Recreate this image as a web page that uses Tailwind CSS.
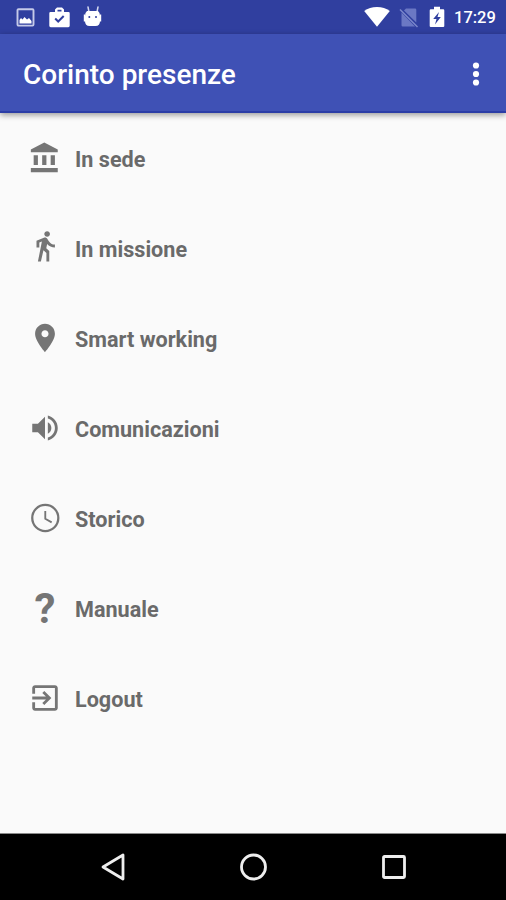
<!DOCTYPE html>
<html lang="it">

<head>
    <meta charset="UTF-8">
    <meta name="viewport" content="width=device-width, initial-scale=1.0">
    <title>Corinto presenze</title>
    <script src="https://cdn.jsdelivr.net/npm/@tailwindcss/browser@4"></script>
</head>

<body class="bg-[#fafafa] font-['Roboto',sans-serif]">
<div class="flex flex-col h-[900px] w-[506px] overflow-hidden">
    <!-- Status bar -->
    <div class="flex items-center h-[34px] shrink-0 bg-[#303f9f] pl-4 pr-[10px] text-white">
        <svg class="w-[19px] h-[19px] mt-px" viewBox="0 0 19 19">
            <rect x="1.500" y="1.200" width="16" height="16.400" rx="1" fill="none" stroke="#c5cae9" stroke-width="1.900"/>
            <path d="M3.500 15.500V12l1.500-2 1.500 1.500 2-2.500 2.500 2.500 2-1.500 2.500 3v2.500z" fill="#fff"/>
        </svg>
        <svg class="w-[21px] h-[21px] ml-[14px]" viewBox="0 0 21 21">
            <path d="M6 5V2.500L8 .5h5l2 2V5h4.500q1.200 0 1.200 1.200v12.600q0 1.400-1.400 1.400H1.700Q.3 20.200.3 18.800V6.200Q.3 5 1.500 5zM8.500 4.500h4V2.800h-4z" fill="#fff" fill-rule="evenodd"/>
            <path d="M6.200 11.500l3 3 5.500-5.500" fill="none" stroke="#303f9f" stroke-width="2"/>
        </svg>
        <svg class="w-[19px] h-[21px] ml-[13px] -mt-px" viewBox="0 0 19 21">
            <path d="M5 1l.8 4M15 1l-.8 4" stroke="#d5d9f0" stroke-width="1.500" stroke-linecap="round"/>
            <path d="M4 5h11q2 1.500 2 5v5q0 5-4.500 5h-6q-4.500 0-4.500-5v-5Q2 6.500 4 5z" fill="#fff"/>
            <path d="M1.500 8.500v7M17.500 8.500v7" stroke="#fff" stroke-width="1.400"/>
            <circle cx="6.300" cy="11" r="1" fill="#303f9f"/>
            <circle cx="13" cy="11" r="1" fill="#303f9f"/>
        </svg>
        <svg class="w-[26px] h-[20px] ml-auto" viewBox="0 0 26 20">
            <path d="M13 19.800L.2 4Q5.500 0 13 0t12.800 4z" fill="#fff"/>
        </svg>
        <svg class="w-[20px] h-[20px] ml-[9px] mt-px" viewBox="0 0 20 20">
            <path d="M7 .5h9q1.300 0 1.300 1.300V14.500L5 2.500zM2.500 4.500L16 18.500H3.800q-1.300 0-1.300-1.300z" fill="#6b78c4"/>
            <path d="M1 1.500l17.500 17.500" stroke="#7c88cc" stroke-width="1.500"/>
        </svg>
        <svg class="w-[16px] h-[22px] ml-[10px]" viewBox="0 0 16 22">
            <path d="M5 .8h6v2.500h3.200q1.100 0 1.100 1.100v15.500q0 1.100-1.100 1.100H1.800q-1.100 0-1.100-1.100V4.400q0-1.100 1.100-1.100H5z" fill="#fff"/>
            <path d="M10 6L4.200 13h3.300L6 18.500l5.800-7.500H8.500z" fill="#303f9f"/>
        </svg>
        <span class="ml-[9px] mt-[3px] w-[42px] text-[16.5px] leading-none font-medium whitespace-nowrap">17:29</span>
    </div>

    <!-- Toolbar -->
    <div class="relative flex items-center justify-between h-[79px] shrink-0 bg-[#3f51b5] border-b-2 border-[#2b3da6] pl-[23px] pr-[26px] shadow-[0_2px_6px_rgba(0,0,0,0.4)]">
        <h1 class="mt-[5px] text-[28px] leading-none font-medium text-white">Corinto presenze</h1>
        <svg class="w-[8px] h-[26px] mt-[2px]" viewBox="0 0 8 26" fill="#fff">
            <circle cx="4" cy="4.500" r="3.100"/>
            <circle cx="4" cy="13" r="3.100"/>
            <circle cx="4" cy="21.500" r="3.100"/>
        </svg>
    </div>

    <!-- Menu -->
    <ul class="flex-1 text-[21.6px] font-bold text-[#6a6a6a]">
        <li class="flex items-center h-[90px] pl-7">
            <svg class="w-[34px] h-[34px]" viewBox="0 0 24 24" fill="#757575">
                <path d="M4 10v7h3v-7H4zm6 0v7h3v-7h-3zM2 22h19v-3H2v3zm14-12v7h3v-7h-3zm-4.500-9L2 6v2h19V6l-9.500-5z"/>
            </svg>
            <span class="ml-[13px] mt-[4px]">In sede</span>
        </li>
        <li class="flex items-center h-[90px] pl-7">
            <svg class="w-[34px] h-[34px] -mt-[4px]" viewBox="0 0 24 24" fill="#757575">
                <path d="M13.500 5.500c1.100 0 2-.9 2-2s-.9-2-2-2-2 .9-2 2 .9 2 2 2zM9.800 8.900L7 23h2.100l1.800-8 2.100 2v6h2v-7.500l-2.100-2 .6-3C14.800 12 16.800 13 19 13v-2c-1.900 0-3.500-1-4.300-2.400l-1-1.600c-.4-.6-1-1-1.700-1-.3 0-.5.1-.8.1L6 8.300V13h2V9.600l1.800-.7"/>
            </svg>
            <span class="ml-[13px] mt-[4px]">In missione</span>
        </li>
        <li class="flex items-center h-[90px] pl-7">
            <svg class="w-[34px] h-[34px]" viewBox="0 0 24 24" fill="#757575">
                <path d="M12 2C8.130 2 5 5.130 5 9c0 5.250 7 13 7 13s7-7.750 7-13c0-3.870-3.130-7-7-7zm0 9.500c-1.380 0-2.500-1.120-2.500-2.500s1.120-2.500 2.500-2.500 2.500 1.120 2.500 2.500-1.120 2.500-2.500 2.500z"/>
            </svg>
            <span class="ml-[13px] mt-[4px]">Smart working</span>
        </li>
        <li class="flex items-center h-[90px] pl-7">
            <svg class="w-[34px] h-[34px]" viewBox="0 0 24 24" fill="#757575">
                <path d="M3 9v6h4l5 5V4L7 9H3zm13.500 3c0-1.770-1.020-3.290-2.500-4.030v8.050c1.480-.73 2.500-2.250 2.500-4.020zM14 3.230v2.060c2.890.86 5 3.540 5 6.710s-2.110 5.850-5 6.710v2.060c4.010-.91 7-4.490 7-8.770s-2.990-7.860-7-8.770z"/>
            </svg>
            <span class="ml-[13px] mt-[4px]">Comunicazioni</span>
        </li>
        <li class="flex items-center h-[90px] pl-7">
            <svg class="w-[34px] h-[34px]" viewBox="0 0 24 24" fill="none" stroke="#757575">
                <circle cx="12.200" cy="12" r="9.200" stroke-width="1.600"/>
                <path d="M12.200 7v5.500l4.500 2.600" stroke-width="1.300"/>
            </svg>
            <span class="ml-[13px] mt-[4px]">Storico</span>
        </li>
        <li class="flex items-center h-[90px] pl-7">
            <span class="w-[34px] mt-px text-center text-[42px] leading-none text-[#757575]">?</span>
            <span class="ml-[13px] mt-[4px]">Manuale</span>
        </li>
        <li class="flex items-center h-[90px] pl-7">
            <svg class="w-[34px] h-[34px]" viewBox="0 0 24 24" fill="#757575">
                <path d="M10.090 15.590L11.500 17l5-5-5-5-1.410 1.410L12.670 11H3v2h9.670l-2.580 2.590zM19 3H5c-1.110 0-2 .9-2 2v4h2V5h14v14H5v-4H3v4c0 1.100.89 2 2 2h14c1.100 0 2-.9 2-2V5c0-1.100-.9-2-2-2z"/>
            </svg>
            <span class="ml-[13px] mt-[4px]">Logout</span>
        </li>
    </ul>

    <!-- Navigation bar -->
    <div class="flex items-center justify-between h-[67px] shrink-0 bg-black border-t border-[#8a8a8a] pl-[99px] pr-[99px]">
        <svg class="w-[28px] h-[30px]" viewBox="0 0 28 30" fill="none" stroke="#eee" stroke-width="2.800" stroke-linejoin="round">
            <path d="M24 3v24L4 15z"/>
        </svg>
        <svg class="w-[28px] h-[28px]" viewBox="0 0 28 28" fill="none" stroke="#eee" stroke-width="2.800">
            <circle cx="13.500" cy="14" r="12"/>
        </svg>
        <svg class="w-[26px] h-[26px]" viewBox="0 0 26 26" fill="none" stroke="#eee" stroke-width="2.800">
            <rect x="2.500" y="2.500" width="21" height="21" rx="1"/>
        </svg>
    </div>
</div>
</body>

</html>
